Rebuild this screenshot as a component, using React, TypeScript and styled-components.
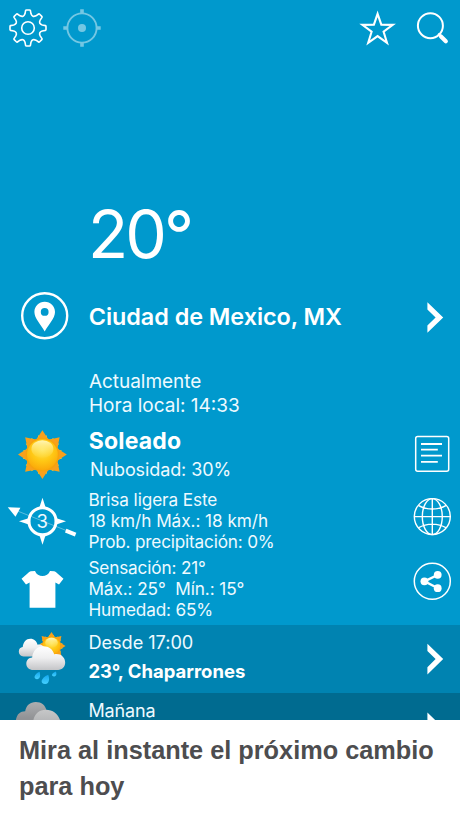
import React from "react";
import styled, { createGlobalStyle } from "styled-components";

const GlobalStyle = createGlobalStyle`
  * { box-sizing: border-box; }
  html, body { margin: 0; background: #fff; }
  body { font-family: Inter, "Noto Sans", sans-serif; color: #fff; }
`;

const Screen = styled.main`
  width: 460px;
  height: 818px;
  display: flex;
  flex-direction: column;
  overflow: hidden;
  background: #fff;
`;

const Weather = styled.section`
  height: 720px;
  flex: none;
  overflow: hidden;
  background: #0099cd;
`;

const TopBar = styled.header`
  height: 56px;
  display: flex;
  justify-content: space-between;
`;

const IconGroup = styled.div`
  display: flex;
`;

const Temperature = styled.div`
  height: 231px;
  padding: 145px 0 0 88px;
  font-size: 66px;
  line-height: 66px;
  font-weight: 380;
  letter-spacing: -2.9px;
`;

const Row = styled.div<{ $height: number; $tint?: string }>`
  display: grid;
  grid-template-columns: 88px 1fr 60px;
  height: ${(p) => p.$height}px;
  background: ${(p) => p.$tint ?? "transparent"};
`;

const Lines = styled.div<{ $top: number; $indent?: number }>`
  grid-column: 2;
  display: flex;
  flex-direction: column;
  padding: ${(p) => p.$top}px 0 0 ${(p) => p.$indent ?? 0}px;
`;

const Line = styled.span<{
  $size: number;
  $height: number;
  $weight?: number;
  $spacing?: number;
  $indent?: number;
}>`
  font-size: ${(p) => p.$size}px;
  line-height: ${(p) => p.$height}px;
  font-weight: ${(p) => p.$weight ?? 400};
  color: ${(p) => (p.$weight ? "#fff" : "#eefaff")};
  letter-spacing: ${(p) => p.$spacing ?? 0}px;
  padding-left: ${(p) => p.$indent ?? 0}px;
  white-space: pre;
`;

const Icon = styled.svg`
  display: block;
  flex: none;
  overflow: visible;
  fill: none;
  stroke: #fff;
`;

const Caption = styled.footer`
  flex: 1;
  padding: 12px 19px 0;
  font-family: "Liberation Sans", Arial, sans-serif;
  font-size: 25.3px;
  line-height: 36px;
  font-weight: 700;
  color: #4d4d4f;
`;

const gearPath = (() => {
  const at = (deg: number, r: number, off: number) => {
    const a = (deg * Math.PI) / 180;
    const x = 28 + Math.sin(a) * r + Math.cos(a) * off;
    const y = 28 - Math.cos(a) * r + Math.sin(a) * off;
    return `${x.toFixed(2)} ${y.toFixed(2)}`;
  };
  let d = "";
  for (let i = 0; i < 8; i++) {
    const g = i * 45;
    d += `${i ? "L" : "M"}${at(g, 14.2, -3)} L${at(g, 17.4, -2.4)} Q${at(g, 18, -2.2)} ${at(g, 18, -1.5)} `;
    d += `L${at(g, 18, 1.5)} Q${at(g, 18, 2.2)} ${at(g, 17.4, 2.4)} L${at(g, 14.2, 3)} `;
    d += `Q${at(g + 22.5, 11.2, 0)} ${at(g + 45, 14.2, -3)} `;
  }
  return d + "Z";
})();

const starPoints = (cx: number, cy: number, r: number, inner: number, n: number, turn = 0) =>
  Array.from({ length: n * 2 }, (_, i) => {
    const a = (i * Math.PI) / n + turn;
    const k = i % 2 ? inner : r;
    return `${(cx + Math.sin(a) * k).toFixed(2)},${(cy - Math.cos(a) * k).toFixed(2)}`;
  }).join(" ");

const Gear = () => (
  <Icon width="56" height="56" viewBox="0 0 56 56" strokeWidth="1.6" strokeLinejoin="round">
    <path d={gearPath} />
    <circle cx="28" cy="28" r="6.3" />
  </Icon>
);

const Locate = () => (
  <Icon width="56" height="56" viewBox="56 0 56 56" opacity="0.45">
    <circle cx="82" cy="28" r="14.6" strokeWidth="1.9" />
    <circle cx="82" cy="28" r="4" fill="#fff" stroke="none" />
    <path d="M82 9.3v4.2M82 42.5v4.2M63.3 28h4.2M96.5 28h4.2" strokeWidth="3.6" />
  </Icon>
);

const Favourite = () => (
  <Icon width="54" height="56" viewBox="350 0 54 56">
    <polygon points={starPoints(377.6, 29.8, 16, 6.3, 5)} strokeWidth="2.1" strokeMiterlimit="10" />
  </Icon>
);

const Search = () => (
  <Icon width="56" height="56" viewBox="404 0 56 56" strokeLinecap="round">
    <circle cx="430.4" cy="25.7" r="12.5" strokeWidth="2" />
    <path d="M439 34.500l3 3" strokeWidth="2.6" />
    <path d="M441 36.600l4.800 4.600" strokeWidth="4.200" />
  </Icon>
);

const Pin = () => (
  <Icon width="88" height="58" viewBox="0 287 88 58">
    <circle cx="44.7" cy="315.8" r="22.5" strokeWidth="2.4" />
    <path
      fill="#fff"
      stroke="none"
      fillRule="evenodd"
      d="M44.7 301.800c5.800 0 10.300 4.400 10.300 10.200 0 6.400-6.200 12-10.300 19.600-4.100-7.600-10.300-13.200-10.300-19.600 0-5.800 4.500-10.200 10.300-10.200zm0 6.200a3.900 3.900 0 100 7.800 3.900 3.900 0 000-7.800z"
    />
  </Icon>
);

const Chevron = ({ size, y }: { size: number; y: number }) => (
  <Icon width="60" height={size} viewBox={`400 0 60 ${size}`}>
    <path
      transform={`translate(427.400 ${y})`}
      fill="#fff"
      stroke="none"
      d="M0 0L15.800 15.300L0 30.600V23.400L8.200 15.300L0 7.200Z"
    />
  </Icon>
);

const SunShape = ({ id, cx, cy, r }: { id: string; cx: number; cy: number; r: number }) => (
  <g stroke="none">
    <defs>
      <radialGradient id={`${id}-disc`} cx="0.5" cy="0.35" r="0.65">
        <stop offset="0" stopColor="#ffe350" />
        <stop offset="0.55" stopColor="#ffc814" />
        <stop offset="1" stopColor="#fba90a" />
      </radialGradient>
      <linearGradient id={`${id}-shine`} x1="0" y1="0" x2="0" y2="1">
        <stop offset="0" stopColor="#fff9c0" stopOpacity="0.95" />
        <stop offset="1" stopColor="#ffe868" stopOpacity="0.1" />
      </linearGradient>
    </defs>
    <polygon points={starPoints(cx, cy, r * 0.82, r * 0.6, 16, Math.PI / 16)} fill="#ffd52e" />
    <polygon points={starPoints(cx, cy, r, r * 0.66, 8)} fill="#f8a01c" />
    <circle cx={cx} cy={cy} r={r * 0.69} fill="#f7a30c" />
    <circle cx={cx} cy={cy} r={r * 0.63} fill={`url(#${id}-disc)`} />
    <ellipse cx={cx} cy={cy - r * 0.23} rx={r * 0.45} ry={r * 0.36} fill={`url(#${id}-shine)`} />
  </g>
);

const Sun = () => (
  <Icon width="88" height="71" viewBox="0 417 88 71">
    <SunShape id="sun" cx={42.4} cy={454.6} r={24.4} />
  </Icon>
);

const NoteIcon = () => (
  <Icon width="60" height="71" viewBox="400 417 60 71" strokeWidth="1.5">
    <rect x="415.700" y="436.400" width="33" height="34.800" rx="2" />
    <path d="M421 444h21M421 449.700h16.800M421 455.700h21M421 461.800h16.800" strokeWidth="1.800" />
  </Icon>
);

const compassPoints =
  "M42.5 497.800L46.100 509H38.900ZM42.5 544.800L46.100 533.600H38.900ZM19 521.300L30.200 517.700V524.900ZM66 521.300L54.800 517.700V524.900Z";

const Compass = () => (
  <Icon width="88" height="69" viewBox="0 488 88 69">
    <path d="M10 508L70 532" strokeWidth="0.900" opacity="0.4" />
    <path d={compassPoints} fill="#fff" stroke="none" />
    <circle cx="42.5" cy="521.3" r="13.600" strokeWidth="3" />
    <path d="M7.800 507.300L20.400 507.800L15.500 516.800Z" fill="#fff" stroke="none" />
    <path d="M65.700 530.700L75.600 534.600" strokeWidth="4" />
    <text
      x="42.300"
      y="528"
      textAnchor="middle"
      fontFamily="Inter, sans-serif"
      fontSize="18.500"
      fill="#eefaff"
      stroke="none"
    >
      3
    </text>
  </Icon>
);

const Globe = () => (
  <Icon width="60" height="69" viewBox="400 488 60 69" strokeWidth="1.400">
    <circle cx="432.300" cy="516.600" r="18" />
    <ellipse cx="432.300" cy="516.600" rx="10" ry="18" />
    <path d="M432.300 498.600v36M414.300 516.600h36M418.300 505.300c8.600 5 19.400 5 28 0M418.300 527.900c8.600-5 19.400-5 28 0" />
  </Icon>
);

const Shirt = () => (
  <Icon width="88" height="68" viewBox="0 557 88 68">
    <path
      fill="#fff"
      stroke="none"
      d="M30.700 571.200L35 571c2.300 6.800 12.700 6.800 15 0l4.300.2Q56 571.800 57.200 573.200L63.500 578.800L59 584.600L55.400 582.600V607.800H29.600V582.600L26 584.600L21.500 578.800L27.800 573.200Q29 571.800 30.700 571.200Z"
    />
  </Icon>
);

const Share = () => (
  <Icon width="60" height="68" viewBox="400 557 60 68">
    <circle cx="432.300" cy="581.300" r="18" strokeWidth="1.500" />
    <path d="M437.500 575L424.500 581.300L437.500 588" strokeWidth="2.400" />
    <g fill="#fff" stroke="none">
      <circle cx="437.700" cy="574.800" r="3.900" />
      <circle cx="424.400" cy="581.300" r="3.900" />
      <circle cx="437.700" cy="588.200" r="3.900" />
    </g>
  </Icon>
);

const cloudShape =
  "M7 22C2.800 22 0 19.600 0 16.200C0 12.800 2.600 10.500 5.800 10.400C6.500 4.200 10.800 0 17 0C22.600 0 26.200 3 27.600 7.400C33.300 6.200 38.500 9.600 38.500 15.200C38.500 19.400 35.500 22 31.500 22Z";
const dropShape = "M6 0C7.200 3.200 7.400 9.200 3.400 9.400C-1.400 9.400 -.8 3.400 6 0Z";

const Showers = () => (
  <Icon width="88" height="68" viewBox="0 625 88 68">
    <defs>
      <linearGradient id="cloud" x1="0" y1="0" x2="0" y2="1">
        <stop offset="0" stopColor="#fff" />
        <stop offset="0.5" stopColor="#eeeeef" />
        <stop offset="1" stopColor="#c4c5c8" />
      </linearGradient>
      <linearGradient id="drop" x1="0" y1="0" x2="0" y2="1">
        <stop offset="0" stopColor="#14a8ee" />
        <stop offset="1" stopColor="#45d0ff" />
      </linearGradient>
    </defs>
    <SunShape id="rain-sun" cx={51.5} cy={646} r={14} />
    <g stroke="none">
      <path d={cloudShape} transform="translate(18.800 638.800) scale(.68 .8)" fill="url(#cloud)" />
      <path d={cloudShape} transform="translate(26.300 646.200) scale(1.010 1.080)" fill="url(#cloud)" />
      <g fill="url(#drop)">
        <path d={dropShape} transform="translate(34.300 671.800) scale(.86 .78)" />
        <path d={dropShape} transform="translate(41.300 674.800) scale(1.150 .98)" />
        <path d={dropShape} transform="translate(51.800 671.600) scale(.68 .52)" />
      </g>
    </g>
  </Icon>
);

const GreyClouds = () => (
  <Icon width="88" height="68" viewBox="0 693 88 68">
    <defs>
      <linearGradient id="grey-back" x1="0" y1="0" x2="0" y2="1">
        <stop offset="0" stopColor="#adaeb0" />
        <stop offset="0.7" stopColor="#929396" />
      </linearGradient>
      <linearGradient id="grey-front" x1="0" y1="0" x2="0" y2="1">
        <stop offset="0" stopColor="#c6c7c8" />
        <stop offset="1" stopColor="#9b9c9f" />
      </linearGradient>
    </defs>
    <g stroke="none">
      <path
        d="M15.500 725C15.500 715.500 19 711.200 25.200 711.200C26 705.600 30 702 35.800 702C41.500 702 45.500 705.200 46.700 711V725Z"
        fill="url(#grey-back)"
      />
      <path
        d="M26 740C26 728 28.500 722 33.300 720.500C34.600 713.800 39 709.700 46 709.700C53 709.700 58.500 714 60.300 721L64 740Z"
        fill="url(#grey-front)"
      />
    </g>
  </Icon>
);

export default function App() {
  return (
    <Screen>
      <GlobalStyle />
      <Weather>
        <TopBar>
          <IconGroup>
            <Gear />
            <Locate />
          </IconGroup>
          <IconGroup>
            <Favourite />
            <Search />
          </IconGroup>
        </TopBar>
        <Temperature>20°</Temperature>
        <Row $height={58}>
          <Pin />
          <Lines $top={15} $indent={0.8}>
            <Line $size={23.4} $height={30} $weight={600} $spacing={-0.05}>Ciudad de Mexico, MX</Line>
          </Lines>
          <Chevron size={58} y={15.2} />
        </Row>
        <Row $height={72}>
          <Lines $top={25} $indent={1}>
            <Line $size={19} $height={24} $spacing={-0.05}>Actualmente</Line>
            <Line $size={19} $height={24}>Hora local: 14:33</Line>
          </Lines>
        </Row>
        <Row $height={71}>
          <Sun />
          <Lines $top={10} $indent={0.7}>
            <Line $size={23} $height={29} $weight={650} $spacing={0.2}>Soleado</Line>
            <Line $size={18} $height={27} $spacing={-0.1} $indent={1.3}>Nubosidad: 30%</Line>
          </Lines>
          <NoteIcon />
        </Row>
        <Row $height={69}>
          <Compass />
          <Lines $top={1} $indent={0.4}>
            <Line $size={17.2} $height={21} $spacing={-0.09}>Brisa ligera Este</Line>
            <Line $size={17.2} $height={21} $spacing={-0.05}>18 km/h Máx.: 18 km/h</Line>
            <Line $size={17.2} $height={21} $spacing={-0.19}>Prob. precipitación: 0%</Line>
          </Lines>
          <Globe />
        </Row>
        <Row $height={68}>
          <Shirt />
          <Lines $top={0} $indent={0.4}>
            <Line $size={17.2} $height={21} $spacing={-0.15}>Sensación: 21°</Line>
            <Line $size={17.2} $height={21} $spacing={-0.08}>{"Máx.: 25°  Mín.: 15°"}</Line>
            <Line $size={17.2} $height={21} $spacing={-0.15}>Humedad: 65%</Line>
          </Lines>
          <Share />
        </Row>
        <Row $height={68} $tint="#0083b1">
          <Showers />
          <Lines $top={3} $indent={0.4}>
            <Line $size={18.2} $height={29} $spacing={-0.05}>Desde 17:00</Line>
            <Line $size={18.5} $height={29} $weight={650}>23°, Chaparrones</Line>
          </Lines>
          <Chevron size={68} y={18.8} />
        </Row>
        <Row $height={68} $tint="#006b90">
          <GreyClouds />
          <Lines $top={4} $indent={0.4}>
            <Line $size={18} $height={28} $spacing={-0.15}>Mañana</Line>
          </Lines>
          <Chevron size={68} y={19.5} />
        </Row>
      </Weather>
      <Caption>Mira al instante el próximo cambio para hoy</Caption>
    </Screen>
  );
}
